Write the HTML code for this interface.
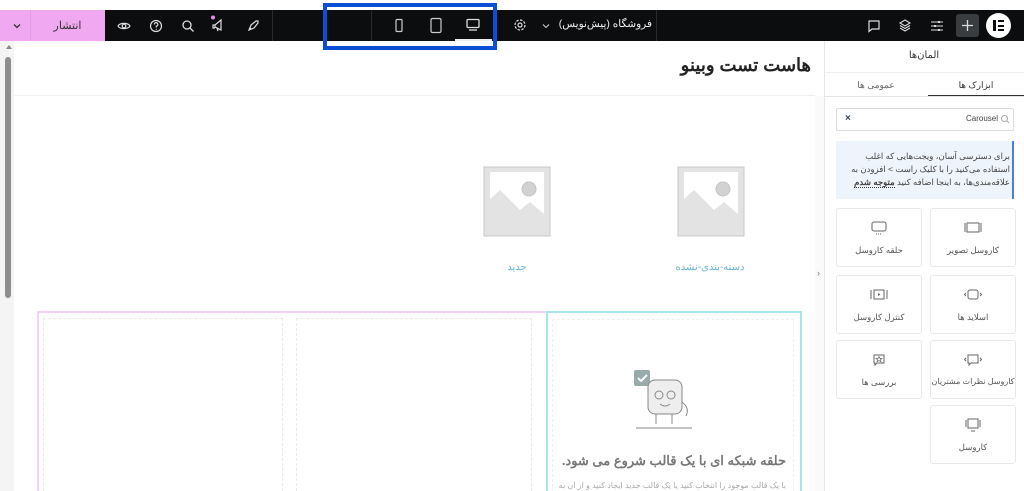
<!DOCTYPE html>
<html><head><meta charset="utf-8"><style>
*{box-sizing:border-box;margin:0;padding:0}
html,body{width:1024px;height:491px;overflow:hidden}
body{background:#fff;position:relative;font-family:"Liberation Sans","Noto Sans CJK SC",sans-serif;}
.abs{position:absolute}
.bar{left:0;top:10px;width:1024px;height:31px;background:#0c0d0e}
.card{position:absolute;width:86px;height:59px;border:1px solid #e6e8ea;border-radius:3px;text-align:center;font-size:8.5px;color:#555;direction:rtl;white-space:nowrap}
.card svg{display:block;margin:12px auto 10px}
.dash{position:absolute;border:1px dashed #e9e9e9}
</style></head><body>
<div class="abs bar"></div>
<div class="abs" style="left:0;top:10px;width:105px;height:31px;background:#f0a8f0"></div>
<div class="abs" style="left:30px;top:10px;width:1px;height:31px;background:#e59be5"></div>
<svg class="abs" style="left:12px;top:21px" width="10" height="10" viewBox="0 0 10 10"><path d="M2 3.5l3 3 3-3" stroke="#333" stroke-width="1.3" fill="none"/></svg>
<div class="abs" style="left:40px;top:19px;width:55px;text-align:center;font-size:11px;color:#333;direction:rtl">انتشار</div>
<svg class="abs" style="left:117px;top:19px" width="14" height="14" viewBox="0 0 14 14"><path d="M1 7c2-3.5 10-3.5 12 0c-2 3.5-10 3.5-12 0z" stroke="#ddd" fill="none" stroke-width="1.2"/><circle cx="7" cy="7" r="1.8" stroke="#ddd" fill="none" stroke-width="1.2"/></svg>
<svg class="abs" style="left:149px;top:19px" width="14" height="14" viewBox="0 0 14 14"><circle cx="7" cy="7" r="5.5" stroke="#ddd" fill="none" stroke-width="1.2"/><path d="M5.3 5.5a1.8 1.8 0 1 1 2 1.7v1.3" stroke="#ddd" fill="none" stroke-width="1.2"/><circle cx="7.3" cy="10.2" r=".6" fill="#ddd"/></svg>
<svg class="abs" style="left:181px;top:19px" width="14" height="14" viewBox="0 0 14 14"><circle cx="6" cy="6" r="4" stroke="#ddd" fill="none" stroke-width="1.3"/><path d="M9 9l3.5 3.5" stroke="#ddd" stroke-width="1.3"/></svg>
<svg class="abs" style="left:210px;top:15px" width="18" height="18" viewBox="0 0 18 18"><circle cx="3" cy="2.5" r="2" fill="#e88ce8"/><path d="M5 10l6-5v10l-6-3z M5 10h-2v3h2 M7 13l1 3" stroke="#ddd" fill="none" stroke-width="1.2"/></svg>
<svg class="abs" style="left:246px;top:19px" width="14" height="14" viewBox="0 0 14 14"><path d="M3 11l2-5 5-4 2 0 0 2-4 5-5 2z M5 9l-1 1" stroke="#ddd" fill="none" stroke-width="1.2"/></svg>
<div class="abs" style="left:272px;top:10px;width:1px;height:31px;background:#2a2a2a"></div>
<div class="abs" style="left:371px;top:10px;width:1px;height:31px;background:#2a2a2a"></div>
<svg class="abs" style="left:393px;top:18px" width="12" height="16" viewBox="0 0 12 16"><rect x="3" y="1.5" width="6" height="12" rx="1" stroke="#ccc" fill="none" stroke-width="1.2"/></svg>
<svg class="abs" style="left:429px;top:17px" width="14" height="18" viewBox="0 0 14 18"><rect x="2" y="1.5" width="10" height="14" rx="1.5" stroke="#ccc" fill="none" stroke-width="1.2"/></svg>
<svg class="abs" style="left:465px;top:17px" width="16" height="16" viewBox="0 0 16 16"><rect x="2" y="2.5" width="12" height="8" rx="1" stroke="#ddd" fill="none" stroke-width="1.3"/><path d="M4 13h8" stroke="#ddd" stroke-width="1.3"/></svg>
<div class="abs" style="left:455px;top:39px;width:37px;height:2px;background:#eee"></div>
<div class="abs" style="left:323px;top:3px;width:174px;height:47px;border:4px solid #0b4fd6"></div>
<svg class="abs" style="left:513px;top:18px" width="14" height="14" viewBox="0 0 14 14"><circle cx="7" cy="7" r="2" stroke="#ddd" fill="none" stroke-width="1.2"/><circle cx="7" cy="7" r="5" stroke="#ddd" fill="none" stroke-width="1.2" stroke-dasharray="2.5 1.4"/></svg>
<svg class="abs" style="left:541px;top:21px" width="10" height="10" viewBox="0 0 10 10"><path d="M2 3.5l3 3 3-3" stroke="#ccc" stroke-width="1.1" fill="none"/></svg>
<div class="abs" style="left:556px;top:18px;width:96px;font-size:10.5px;color:#eee;direction:rtl;text-align:right;white-space:nowrap">فروشگاه (پیش‌نویس)</div>
<div class="abs" style="left:656px;top:10px;width:1px;height:31px;background:#2a2a2a"></div>
<svg class="abs" style="left:867px;top:19px" width="14" height="14" viewBox="0 0 14 14"><path d="M2 2h10v8h-7l-3 2.5z" stroke="#ddd" fill="none" stroke-width="1.2"/></svg>
<svg class="abs" style="left:898px;top:18px" width="14" height="14" viewBox="0 0 14 14"><path d="M7 2l5 3-5 3-5-3z M2 7.5l5 3 5-3 M2 10l5 3 5-3" stroke="#ddd" fill="none" stroke-width="1.1"/></svg>
<svg class="abs" style="left:930px;top:19px" width="14" height="14" viewBox="0 0 14 14"><path d="M1 3h12M1 7h12M1 11h12" stroke="#ddd" stroke-width="1.1"/><rect x="8" y="2" width="2" height="2" fill="#ddd"/><rect x="4" y="6" width="2" height="2" fill="#ddd"/><rect x="8" y="10" width="2" height="2" fill="#ddd"/></svg>
<div class="abs" style="left:956px;top:14px;width:23px;height:23px;background:#3a3d40;border-radius:3px"></div>
<svg class="abs" style="left:961px;top:19px" width="13" height="13" viewBox="0 0 13 13"><path d="M6.5 1v11M1 6.5h11" stroke="#ddd" stroke-width="1.3"/></svg>
<div class="abs" style="left:986px;top:13px;width:25px;height:25px;background:#fff;border-radius:50%"></div>
<div class="abs" style="left:993px;top:20px;width:3px;height:11px;background:#0c0d0e"></div>
<div class="abs" style="left:998px;top:20px;width:6px;height:2px;background:#0c0d0e"></div>
<div class="abs" style="left:998px;top:24.5px;width:6px;height:2px;background:#0c0d0e"></div>
<div class="abs" style="left:998px;top:29px;width:6px;height:2px;background:#0c0d0e"></div>

<div class="abs" style="left:0;top:41px;width:14px;height:450px;background:#f4f4f4"></div>
<div class="abs" style="left:6px;top:45px;width:0;height:0;border:3px solid transparent;border-bottom:4px solid #888;border-top:0"></div>
<div class="abs" style="left:5px;top:57px;width:6px;height:241px;background:#8d8d8d;border-radius:3px"></div>
<div class="abs" style="left:14px;top:95px;width:801px;height:1px;background:#f0f0f0"></div>
<div class="abs" style="left:600px;top:55px;width:211px;font-size:18px;font-weight:bold;color:#222;direction:rtl;text-align:right">هاست تست وبینو</div>
<svg class="abs" style="left:483px;top:166px" width="68" height="71" viewBox="0 0 68 71"><rect x="1" y="1" width="66" height="69" fill="#e3e3e3" stroke="#c8c8c8"/><path d="M7 6h54v42L47 36 37 44 17 24 7 33z" fill="#fff"/><circle cx="46" cy="23" r="7" fill="#d2d2d2" stroke="#c4c4c4"/></svg>
<svg class="abs" style="left:677px;top:166px" width="68" height="71" viewBox="0 0 68 71"><rect x="1" y="1" width="66" height="69" fill="#e3e3e3" stroke="#c8c8c8"/><path d="M7 6h54v42L47 36 37 44 17 24 7 33z" fill="#fff"/><circle cx="46" cy="23" r="7" fill="#d2d2d2" stroke="#c4c4c4"/></svg>
<div class="abs" style="left:470px;top:262px;width:94px;text-align:center;font-size:10px;color:#6ab3d8">جدید</div>
<div class="abs" style="left:660px;top:262px;width:100px;text-align:center;font-size:10px;color:#6ab3d8;direction:rtl">دسته-بندی-نشده</div>
<div class="abs" style="left:815px;top:96px;width:9px;height:395px;background:#fafafa"></div>
<div class="abs" style="left:817px;top:268px;font-size:9px;color:#777">›</div>
<div class="abs" style="left:37px;top:311px;width:510px;height:184px;border:2px solid #f3d3f3;border-right:none"></div>
<div class="abs" style="left:546px;top:311px;width:256px;height:184px;border:2px solid #a8e4e8"></div>
<div class="dash" style="left:43px;top:318px;width:240px;height:178px"></div>
<div class="dash" style="left:296px;top:318px;width:236px;height:178px"></div>
<div class="dash" style="left:552px;top:319px;width:242px;height:178px;border-color:#f0eef5"></div>
<svg class="abs" style="left:630px;top:362px" width="70" height="72" viewBox="0 0 70 72"><rect x="4" y="8" width="16" height="16" rx="2" fill="#9aa" /><path d="M8 16l3 3 6-6" stroke="#fff" stroke-width="2" fill="none"/><rect x="18" y="18" width="34" height="34" rx="7" fill="#eee" stroke="#888"/><circle cx="29" cy="33" r="4" fill="none" stroke="#888"/><circle cx="41" cy="33" r="4" fill="none" stroke="#888"/><path d="M30 42q5 4 10 0" stroke="#888" fill="none"/><path d="M26 52v10M42 52v10M6 66h56M52 40q8 6 4 14" stroke="#888" fill="none"/></svg>
<div class="abs" style="left:552px;top:453px;width:234px;text-align:right;direction:rtl;font-size:13px;font-weight:bold;color:#777;white-space:nowrap">حلقه شبکه ای با یک قالب شروع می شود.</div>
<div class="abs" style="left:552px;top:481px;width:234px;text-align:right;direction:rtl;font-size:8px;color:#aaa;white-space:nowrap;overflow:hidden">با یک قالب موجود را انتخاب کنید یا یک قالب جدید ایجاد کنید و از آن به</div>

<div class="abs" style="left:824px;top:41px;width:200px;height:450px;background:#fff;border-left:1px solid #e6e8ea"></div>
<div class="abs" style="left:824px;top:50px;width:200px;text-align:center;font-size:10px;color:#333">المان‌ها</div>
<div class="abs" style="left:825px;top:72px;width:199px;height:1px;background:#eee"></div>
<div class="abs" style="left:928px;top:80px;width:96px;text-align:center;font-size:9px;color:#333">ابزارک ها</div>
<div class="abs" style="left:828px;top:80px;width:96px;text-align:center;font-size:9px;color:#666">عمومی ها</div>
<div class="abs" style="left:928px;top:95px;width:96px;height:2px;background:#333"></div>
<div class="abs" style="left:825px;top:96px;width:199px;height:1px;background:#e6e6e6"></div>
<div class="abs" style="left:836px;top:108px;width:178px;height:23px;border:1px solid #dcdcdc;border-radius:2px"></div>
<div class="abs" style="left:845px;top:113px;font-size:10px;color:#345;font-weight:bold">×</div>
<div class="abs" style="left:966px;top:114px;font-size:8px;color:#444">Carousel</div>
<svg class="abs" style="left:1000px;top:114px" width="10" height="10" viewBox="0 0 10 10"><circle cx="4.5" cy="4.5" r="3" stroke="#aaa" fill="none"/><path d="M7 7l2 2" stroke="#aaa"/></svg>
<div class="abs" style="left:836px;top:141px;width:178px;height:58px;background:#eef4fc;border-right:2px solid #4a7fe0"></div>
<div class="abs" style="left:838px;top:150px;width:172px;direction:rtl;text-align:right;font-size:8.5px;line-height:13px;color:#444">برای دسترسی آسان، ویجت‌هایی که اغلب استفاده می‌کنید را با کلیک راست &gt; افزودن به علاقه‌مندی‌ها، به اینجا اضافه کنید <b style="border-bottom:1px dotted #333">متوجه شدم</b></div>
<div class="card" style="left:930px;top:208px">
<svg width="20" height="14" viewBox="0 0 20 14"><rect x="4" y="2" width="12" height="9" fill="none" stroke="#666"/><path d="M2 2v9M18 2v9" stroke="#666"/></svg>کاروسل تصویر</div>
<div class="card" style="left:836px;top:208px">
<svg width="20" height="14" viewBox="0 0 20 14"><rect x="3" y="1" width="14" height="9" rx="2" fill="none" stroke="#666"/><path d="M7 13h6" stroke="#666" stroke-dasharray="1 1"/></svg>حلقه کاروسل</div>
<div class="card" style="left:930px;top:275px">
<svg width="20" height="14" viewBox="0 0 20 14"><rect x="5" y="2" width="10" height="9" rx="2" fill="none" stroke="#666"/><path d="M3 5l-1.5 1.5L3 8M17 5l1.5 1.5L17 8" stroke="#666" fill="none"/></svg>اسلاید ها</div>
<div class="card" style="left:836px;top:275px">
<svg width="20" height="14" viewBox="0 0 20 14"><rect x="5" y="2" width="10" height="9" fill="none" stroke="#666"/><path d="M9 5v3l2.5-1.5z" fill="#666"/><path d="M2 2v9M18 2v9" stroke="#666"/></svg>کنترل کاروسل</div>
<div class="card" style="left:930px;top:340px;font-size:8px">
<svg width="20" height="14" viewBox="0 0 20 14"><path d="M5 2h10v8h-7l-2 2v-2h-1z" fill="none" stroke="#666"/><path d="M3 5l-1.5 1.5L3 8M17 5l1.5 1.5L17 8" stroke="#666" fill="none"/></svg>کاروسل نظرات مشتریان</div>
<div class="card" style="left:836px;top:340px">
<svg width="20" height="14" viewBox="0 0 20 14"><path d="M5 2h10v8h-7l-2 2v-2h-1z" fill="none" stroke="#666"/><path d="M10 3.5l1 2h2l-1.6 1.2.6 2-2-1.2-2 1.2.6-2L7 5.5h2z" fill="none" stroke="#666" stroke-width=".7"/></svg>بررسی ها</div>
<div class="card" style="left:930px;top:405px">
<svg width="20" height="14" viewBox="0 0 20 14"><rect x="5" y="1" width="10" height="9" fill="none" stroke="#666"/><path d="M3 2v7M17 2v7M8 13h4" stroke="#666"/></svg>کاروسل</div>
</body></html>
